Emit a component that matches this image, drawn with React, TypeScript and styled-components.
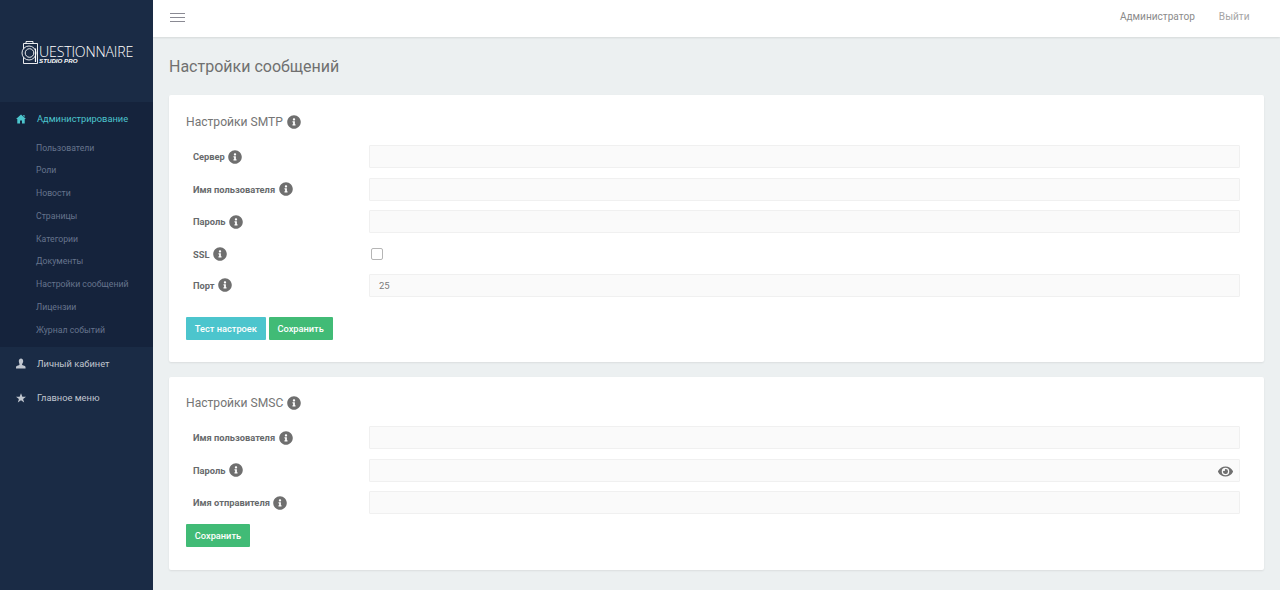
import styled, { createGlobalStyle } from "styled-components";
import { FaEye, FaInfoCircle } from "react-icons/fa";

const GlobalStyle = createGlobalStyle`
  html, body {
    margin: 0;
    height: 100%;
    background: #ecf0f1;
    font-family: Roboto, "Liberation Sans", sans-serif;
    overflow: hidden;
  }
`;

const adminItems = [
  "Пользователи",
  "Роли",
  "Новости",
  "Страницы",
  "Категории",
  "Документы",
  "Настройки сообщений",
  "Лицензии",
  "Журнал событий",
];

const HomeGlyph = () => (
  <svg width="10" height="10" viewBox="0 0 11 10" fill="currentColor">
    <path d="M5.5 0 L11 5 L9.6 5 L9.6 10 L6.6 10 L6.6 6.6 L4.4 6.6 L4.4 10 L1.4 10 L1.4 5 L0 5 Z" />
    <path d="M8 .6h1.4v2.4L8 1.8z" />
  </svg>
);

const UserGlyph = () => (
  <svg width="10" height="11" viewBox="0 0 11 11" fill="currentColor">
    <path d="M3.1 2.8C3.1 1.2 4.2 0 5.5 0s2.4 1.2 2.4 2.8c0 1.4-.6 2.8-1.2 3.3v.9c0 .5 1.2.7 2.4 1.1.9.3 1.4.8 1.4 1.4V11H0V9.500c0-.6.5-1.100 1.400-1.400 1.200-.4 2.400-.6 2.400-1.100v-.9C3.700 5.600 3.100 4.200 3.100 2.800z" />
  </svg>
);

const StarGlyph = () => (
  <svg width="10" height="10" viewBox="0 0 11 11" fill="currentColor">
    <path d="M5.5.4 7 4.100h4L7.800 6.500 9 10.500 5.500 8.100 2 10.500l1.200-4L0 4.100h4z" />
  </svg>
);

const Logo = () => (
  <LogoWrapper>
    <svg width="18" height="25" viewBox="0 0 18 25" fill="none" stroke="#fff" strokeWidth="0.9">
      <path d="M2.500 3.500H16.500V23.500H2.500Z" />
      <path d="M5 3.500V1.500H12V3.500" />
      <circle cx="8" cy="13" r="7" fill="#1a2b45" />
      <circle cx="8.500" cy="13" r="4.300" />
      <path d="M14.500 8.500V22" strokeWidth="1.200" />
    </svg>
    <LogoText>
      <LogoName>UESTIONNAIRE</LogoName>
      <LogoSub>STUDIO PRO</LogoSub>
    </LogoText>
  </LogoWrapper>
);

const Hint = () => (
  <HintIcon>
    <FaInfoCircle />
  </HintIcon>
);

const App = () => {
  return (
    <Page>
      <GlobalStyle />
      <Sidebar>
        <Logo />
        <ActiveGroup>
          <MenuItem $active>
            <MenuIcon $active>
              <HomeGlyph />
            </MenuIcon>
            Администрирование
          </MenuItem>
          <SubMenu>
            {adminItems.map((item) => (
              <SubItem key={item}>{item}</SubItem>
            ))}
          </SubMenu>
        </ActiveGroup>
        <MenuItem>
          <MenuIcon>
            <UserGlyph />
          </MenuIcon>
          Личный кабинет
        </MenuItem>
        <MenuItem>
          <MenuIcon>
            <StarGlyph />
          </MenuIcon>
          Главное меню
        </MenuItem>
      </Sidebar>
      <Main>
        <TopBar>
          <Burger>
            <span />
            <span />
            <span />
          </Burger>
          <TopLinks>
            <TopLink>Администратор</TopLink>
            <TopLink $muted>Выйти</TopLink>
          </TopLinks>
        </TopBar>
        <Content>
          <PageTitle>Настройки сообщений</PageTitle>
          <Card $height={267} $top={18}>
            <CardTitle>
              Настройки SMTP <Hint />
            </CardTitle>
            <Row>
              <Label>
                Сервер <Hint />
              </Label>
              <Input />
            </Row>
            <Row>
              <Label>
                Имя пользователя <Hint />
              </Label>
              <Input />
            </Row>
            <Row>
              <Label>
                Пароль <Hint />
              </Label>
              <Input />
            </Row>
            <CheckRow>
              <Label>
                SSL <Hint />
              </Label>
              <Checkbox />
            </CheckRow>
            <Row>
              <Label>
                Порт <Hint />
              </Label>
              <Input>25</Input>
            </Row>
            <Buttons $top={20}>
              <Button $color="#4cc5cd">Тест настроек</Button>
              <Button $color="#41bb76">Сохранить</Button>
            </Buttons>
          </Card>
          <Card $height={193} $top={17.3}>
            <CardTitle>
              Настройки SMSC <Hint />
            </CardTitle>
            <Row>
              <Label>
                Имя пользователя <Hint />
              </Label>
              <Input />
            </Row>
            <Row>
              <Label>
                Пароль <Hint />
              </Label>
              <Input>
                <EyeIcon>
                  <FaEye />
                </EyeIcon>
              </Input>
            </Row>
            <Row>
              <Label>
                Имя отправителя <Hint />
              </Label>
              <Input />
            </Row>
            <Buttons $top={0}>
              <Button $color="#41bb76">Сохранить</Button>
            </Buttons>
          </Card>
        </Content>
      </Main>
    </Page>
  );
};

const Page = styled.div`
  display: flex;
  width: 1280px;
  height: 590px;
  overflow: hidden;
`;
const Sidebar = styled.aside`
  flex: 0 0 153px;
  background: #1a2b45;
  box-sizing: border-box;
  padding-top: 102px;
  position: relative;
`;
const LogoWrapper = styled.div`
  position: absolute;
  left: 21px;
  top: 40px;
  display: flex;
  align-items: flex-start;
`;
const LogoText = styled.div`
  display: flex;
  flex-direction: column;
`;
const LogoName = styled.div`
  font-family: "Open Sans", sans-serif;
  font-weight: 300;
  font-size: 14.2px;
  line-height: 12px;
  margin-top: 6px;
  color: #fff;
  letter-spacing: -0.2px;
`;
const LogoSub = styled.div`
  font-family: "Liberation Sans", sans-serif;
  font-style: italic;
  font-weight: 700;
  font-size: 6.2px;
  line-height: 6px;
  color: #fff;
`;
const ActiveGroup = styled.div`
  background: #15233c;
  height: 245px;
`;
const MenuItem = styled.div<{ $active?: boolean }>`
  display: flex;
  align-items: center;
  box-sizing: border-box;
  height: 34px;
  padding-bottom: 1px;
  font-size: 9.3px;
  color: ${(p) => (p.$active ? "#4cc5cd" : "#c0c6cf")};
`;
const MenuIcon = styled.span<{ $active?: boolean }>`
  flex: 0 0 37px;
  box-sizing: border-box;
  padding-left: 16px;
  display: flex;
  color: ${(p) => (p.$active ? "#4cc5cd" : "#c0c6cf")};
`;
const SubMenu = styled.div`
  padding-top: 0.5px;
`;
const SubItem = styled.div`
  height: 22.75px;
  line-height: 22.75px;
  padding-left: 36px;
  font-size: 8.7px;
  color: #66748c;
`;
const Main = styled.div`
  flex: 1;
  min-width: 0;
`;
const TopBar = styled.header`
  height: 37px;
  box-sizing: border-box;
  background: #fff;
  box-shadow: 0 1px 2px rgba(0, 0, 0, 0.1);
  display: flex;
  align-items: center;
  justify-content: space-between;
  padding: 0 30.5px 3px 17px;
`;
const Burger = styled.div`
  display: flex;
  flex-direction: column;
  gap: 3px;
  width: 15px;
  span {
    height: 1px;
    background: #8a8a93;
  }
`;
const TopLinks = styled.div`
  display: flex;
  gap: 24px;
  margin-bottom: 1px;
`;
const TopLink = styled.span<{ $muted?: boolean }>`
  font-size: 10.1px;
  color: ${(p) => (p.$muted ? "#a5a5a5" : "#8b8b8b")};
`;
const Content = styled.main`
  padding: 0 16px;
`;
const PageTitle = styled.h1`
  margin: 0;
  height: 58px;
  padding-top: 20px;
  box-sizing: border-box;
  font-size: 16px;
  line-height: 19px;
  font-weight: 400;
  color: #707070;
`;
const Card = styled.section<{ $height: number; $top: number }>`
  height: ${(p) => p.$height}px;
  box-sizing: border-box;
  background: #fff;
  border-radius: 2px;
  box-shadow: 0 1px 2px rgba(0, 0, 0, 0.08);
  padding: ${(p) => p.$top}px 24px 0 17px;
  margin-bottom: 15px;
`;
const CardTitle = styled.h2`
  margin: 0 0 14px;
  display: flex;
  align-items: center;
  gap: 4px;
  height: 18px;
  font-size: 12.1px;
  font-weight: 400;
  color: #757575;
`;
const Row = styled.div`
  display: flex;
  align-items: center;
  height: 23px;
  margin-bottom: 9.55px;
`;
const CheckRow = styled(Row)`
  margin-bottom: 8.35px;
`;
const Label = styled.label`
  flex: 0 0 183px;
  box-sizing: border-box;
  padding: 0 0 0 7px;
  display: flex;
  align-items: center;
  gap: 3.5px;
  font-size: 9.3px;
  font-weight: 700;
  color: #676a6c;
`;
const HintIcon = styled.span`
  display: inline-flex;
  font-size: 14px;
  color: #6f6f6f;
`;
const Input = styled.div`
  flex: 1;
  height: 23px;
  box-sizing: border-box;
  position: relative;
  display: flex;
  align-items: center;
  padding-left: 9px;
  background: #fafafa;
  border: 1px solid #f0f0f0;
  border-radius: 1px;
  font-size: 9.5px;
  color: #7a7a7a;
`;
const EyeIcon = styled.span`
  position: absolute;
  right: 6px;
  top: 4px;
  display: flex;
  font-size: 15px;
  color: #6f6f6f;
`;
const Checkbox = styled.span`
  width: 12px;
  height: 12px;
  margin-left: 2px;
  box-sizing: border-box;
  background: #fff;
  border: 1px solid #b5b5b5;
  border-radius: 2px;
`;
const Buttons = styled.div<{ $top: number }>`
  display: flex;
  gap: 3px;
  margin-top: ${(p) => p.$top}px;
`;
const Button = styled.button<{ $color: string }>`
  height: 23px;
  padding: 0 8.8px;
  border: 0;
  border-radius: 1px;
  background: ${(p) => p.$color};
  color: #fff;
  font-family: inherit;
  font-size: 9.25px;
  font-weight: 500;
`;

export default App;
